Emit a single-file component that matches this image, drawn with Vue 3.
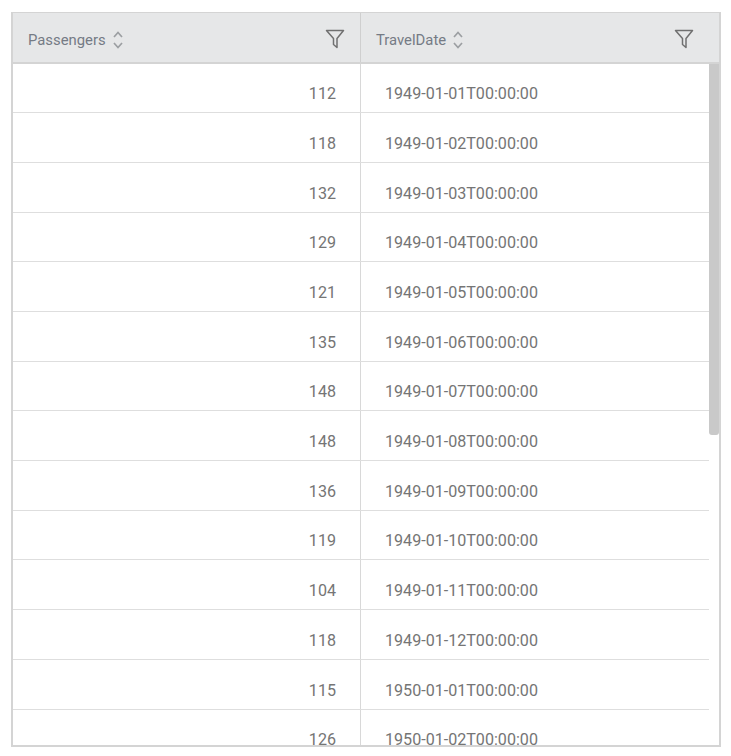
<script setup>
const rows = [
  [112, '1949-01-01T00:00:00'], [118, '1949-01-02T00:00:00'], [132, '1949-01-03T00:00:00'],
  [129, '1949-01-04T00:00:00'], [121, '1949-01-05T00:00:00'], [135, '1949-01-06T00:00:00'],
  [148, '1949-01-07T00:00:00'], [148, '1949-01-08T00:00:00'], [136, '1949-01-09T00:00:00'],
  [119, '1949-01-10T00:00:00'], [104, '1949-01-11T00:00:00'], [118, '1949-01-12T00:00:00'],
  [115, '1950-01-01T00:00:00'], [126, '1950-01-02T00:00:00']
]
const columns = ['Passengers', 'TravelDate']
</script>

<template>
  <div class="grid">
    <div class="head">
      <div v-for="c in columns" :key="c" class="hcell">
        <span class="title">{{ c }}</span>
        <svg class="sort" width="12" height="22" viewBox="0 0 12 22" fill="none" stroke="#9c9fa2" stroke-width="1.7">
          <path d="M2 8 L6 3.5 L10 8" />
          <path d="M2 14 L6 18.5 L10 14" />
        </svg>
        <svg class="filter" width="20" height="20" viewBox="0 0 20 20" fill="none" stroke="#707070" stroke-width="1.5" stroke-linejoin="round">
          <path d="M1.5 1.5 H18.5 L12 9.5 V18.5 L8.5 15.5 V9.5 Z" />
        </svg>
      </div>
    </div>
    <div class="body">
      <div class="rows">
        <div v-for="(r, i) in rows" :key="i" class="row">
          <div class="cell num">{{ r[0] }}</div>
          <div class="cell date">{{ r[1] }}</div>
        </div>
      </div>
      <div class="thumb"></div>
    </div>
  </div>
</template>

<style scoped>
.grid {
  box-sizing: border-box;
  width: 710px;
  height: 735px;
  margin: 12px 0 0 11px;
  border: 2px solid #d4d4d4;
  border-top-width: 1px;
  font-family: Roboto, "Liberation Sans", sans-serif;
  color: #757575;
  overflow: hidden;
  display: flex;
  flex-direction: column;
}
.head {
  flex: none;
  display: grid;
  grid-template-columns: 347px 1fr;
  height: 51px;
  box-sizing: border-box;
  background: #e6e7e8;
  border-bottom: 2px solid #d4d4d4;
}
.hcell {
  display: flex;
  align-items: center;
  padding: 5px 15px 0;
  gap: 6px;
}
.hcell + .hcell {
  border-left: 1px solid #cfcfcf;
  padding-right: 25px;
}
.title {
  font-size: 14.85px;
  color: #757b85;
}
.sort {
  margin-top: -1px;
}
.filter {
  margin-left: auto;
  margin-top: -3px;
}
.body {
  position: relative;
  flex: 1;
  min-height: 0;
}
.rows {
  height: 100%;
  margin-right: 10px;
  overflow: hidden;
}
.row {
  display: grid;
  grid-template-columns: 347px 1fr;
  height: 49.7px;
  box-sizing: border-box;
  border-bottom: 1px solid #dedede;
  font-size: 16.1px;
}
.row:first-child {
  margin-top: -0.4px;
}
.cell {
  padding-top: 20.7px;
  line-height: 20px;
}
.num {
  text-align: right;
  padding-right: 24px;
}
.date {
  border-left: 1px solid #d8d8d8;
  padding-left: 24px;
}
.thumb {
  position: absolute;
  top: 0;
  right: 0;
  width: 10px;
  height: 371px;
  background: #c9c9c9;
  border-radius: 0 0 3px 3px;
}
</style>
